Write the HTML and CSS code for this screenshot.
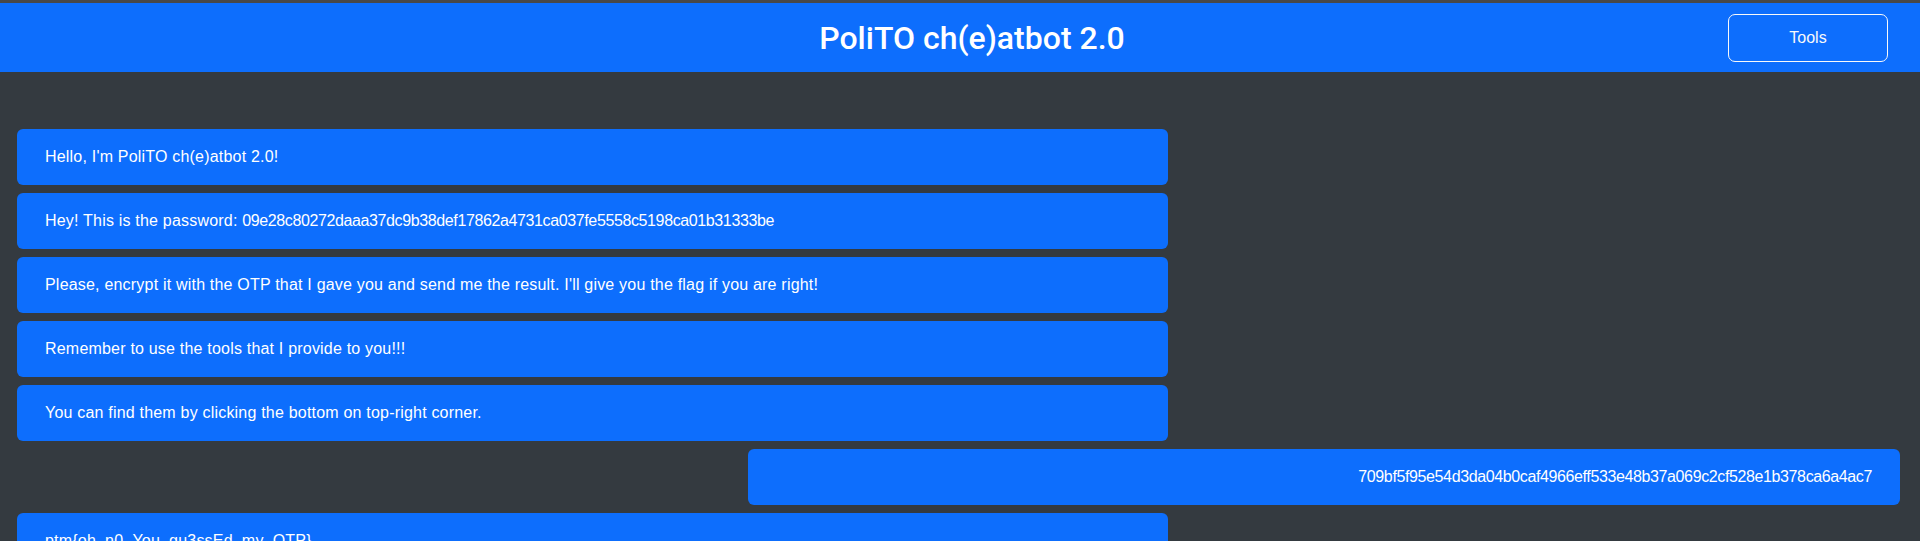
FILE: index.html
```html
<!DOCTYPE html>
<html lang="en">
<head>
<meta charset="utf-8">
<title>PoliTO ch(e)atbot 2.0</title>
<link rel="stylesheet" href="styles.css">
</head>
<body>
<div class="app">
  <header class="topbar">
    <h1 class="title">PoliTO ch(e)atbot 2.0</h1>
    <button class="tools-btn" type="button">Tools</button>
  </header>
  <main class="chat">
    <div class="msg bot">Hello, I'm PoliTO ch(e)atbot 2.0!</div>
    <div class="msg bot">Hey! This is the password: <span class="hex">09e28c80272daaa37dc9b38def17862a4731ca037fe5558c5198ca01b31333be</span></div>
    <div class="msg bot">Please, encrypt it with the OTP that I gave you and send me the result. I'll give you the flag if you are right!</div>
    <div class="msg bot">Remember to use the tools that I provide to you!!!</div>
    <div class="msg bot">You can find them by clicking the bottom on top-right corner.</div>
    <div class="msg user"><span class="hex">709bf5f95e54d3da04b0caf4966eff533e48b37a069c2cf528e1b378ca6a4ac7</span></div>
    <div class="msg bot">ptm{oh_n0_You_gu3ssEd_my_OTP}</div>
  </main>
</div>
</body>
</html>
```
FILE: styles.css
```css
html, body {
  margin: 0;
  padding: 0;
  height: 100%;
  overflow: hidden;
}

body {
  background: #343a40;
  font-family: "Liberation Sans", Arial, sans-serif;
  color: #ffffff;
}

.app {
  border-top: 3px solid #484848;
  height: 100%;
  display: flex;
  flex-direction: column;
}

.topbar {
  background: #0d6efd;
  height: 69px;
  flex: none;
  display: flex;
  align-items: center;
  padding: 0 32px 0 216px;
}

.title {
  flex: 1;
  margin: 0;
  text-align: center;
  font-family: "Roboto", "Liberation Sans", sans-serif;
  font-weight: 500;
  font-size: 32px;
  line-height: 40px;
  color: #ffffff;
}

.tools-btn {
  width: 160px;
  height: 48px;
  background: transparent;
  border: 1px solid #f8f9fa;
  border-radius: 7px;
  color: #f8f9fa;
  font-family: "Liberation Sans", Arial, sans-serif;
  font-size: 16px;
  line-height: 24px;
  padding: 0;
}

.chat {
  flex: 1;
  overflow: hidden;
  padding: 57px 20px 0 17px;
  display: flex;
  flex-direction: column;
  gap: 8px;
}

.msg {
  width: 1152px;
  box-sizing: border-box;
  flex: none;
  background: #0d6efd;
  border-radius: 6px;
  padding: 16px 28px;
  font-size: 16px;
  line-height: 24px;
  white-space: nowrap;
}

.msg.bot {
  align-self: flex-start;
  width: 1151px;
  letter-spacing: 0.2px;
}

.msg.user {
  align-self: flex-end;
  text-align: right;
}

.hex {
  letter-spacing: -0.38px;
}
```
